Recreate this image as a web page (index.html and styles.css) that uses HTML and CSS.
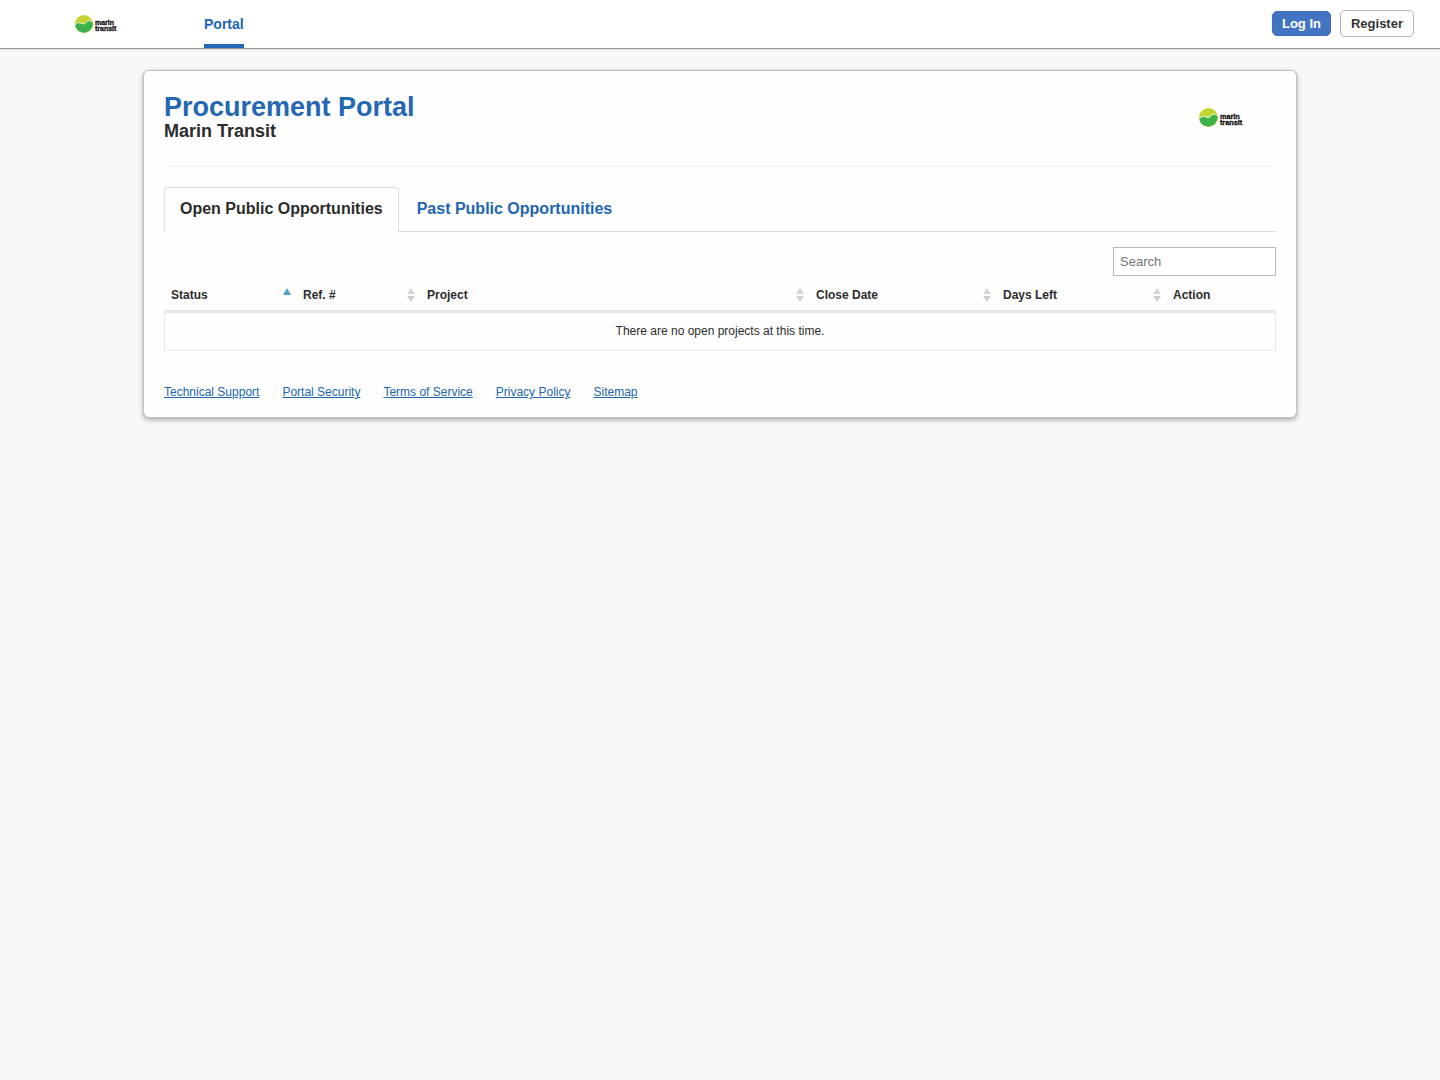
FILE: index.html
```html
<!DOCTYPE html>
<html lang="en">
<head>
<meta charset="utf-8">
<meta name="viewport" content="width=device-width, initial-scale=1">
<title>Procurement Portal - Marin Transit</title>
<link rel="stylesheet" href="styles.css">
</head>
<body>
<header class="topbar">
  <a class="brand" href="#" aria-label="Marin Transit">
    <svg class="brand-logo" viewBox="0 0 46 20">
      <circle cx="10" cy="10" r="9" fill="#c3d32f"/>
      <path d="M1 11 C3 9 4 8.6 6 8.8 C8 9.2 8.6 10.4 10 10 C12 9 13 6.8 15 6.6 C16.4 6.6 17.6 7.6 18.8 8.2 A9 9 0 1 1 1 11Z" fill="#3bb24a"/>
      <path d="M1 11 C3 9 4 8.6 6 8.8 C8 9.2 8.6 10.4 10 10 C12 9 13 6.8 15 6.6 C16.4 6.6 17.6 7.6 18.8 8.2" fill="none" stroke="#eef5c8" stroke-width="1"/>
      <text class="logo-word" x="21" y="11">marin</text>
      <text class="logo-word" x="21" y="17">transit</text>
    </svg>
  </a>
  <nav class="nav"><a class="nav-link" href="#">Portal</a></nav>
  <div class="account">
    <button class="btn btn-primary" type="button">Log In</button>
    <button class="btn btn-plain" type="button">Register</button>
  </div>
</header>
<main class="card">
  <div class="heading">
    <div>
      <h1 class="title">Procurement Portal</h1>
      <h2 class="agency">Marin Transit</h2>
    </div>
    <svg class="agency-logo" viewBox="0 0 46 20" role="img" aria-label="Marin Transit">
      <circle cx="10" cy="10" r="9" fill="#c3d32f"/>
      <path d="M1 11 C3 9 4 8.6 6 8.8 C8 9.2 8.6 10.4 10 10 C12 9 13 6.8 15 6.6 C16.4 6.6 17.6 7.6 18.8 8.2 A9 9 0 1 1 1 11Z" fill="#3bb24a"/>
      <path d="M1 11 C3 9 4 8.6 6 8.8 C8 9.2 8.6 10.4 10 10 C12 9 13 6.8 15 6.6 C16.4 6.6 17.6 7.6 18.8 8.2" fill="none" stroke="#eef5c8" stroke-width="1"/>
      <text class="logo-word" x="21" y="11">marin</text>
      <text class="logo-word" x="21" y="17">transit</text>
    </svg>
  </div>
  <nav class="tabs">
    <a class="tab tab-active" href="#">Open Public Opportunities</a>
    <a class="tab" href="#">Past Public Opportunities</a>
  </nav>
  <div class="filter"><input class="search" type="search" placeholder="Search" aria-label="Search"></div>
  <table class="projects">
    <colgroup><col class="col-status"><col class="col-ref"><col><col class="col-close"><col class="col-days"><col class="col-action"></colgroup>
    <thead>
      <tr>
        <th scope="col"><div class="th">Status<span class="sort sort-asc"></span></div></th>
        <th scope="col"><div class="th">Ref. #<span class="sort"></span></div></th>
        <th scope="col"><div class="th">Project<span class="sort"></span></div></th>
        <th scope="col"><div class="th">Close Date<span class="sort"></span></div></th>
        <th scope="col"><div class="th">Days Left<span class="sort"></span></div></th>
        <th scope="col"><div class="th">Action</div></th>
      </tr>
    </thead>
    <tbody><tr><td colspan="6">There are no open projects at this time.</td></tr></tbody>
  </table>
  <footer class="links">
    <a href="#">Technical Support</a>
    <a href="#">Portal Security</a>
    <a href="#">Terms of Service</a>
    <a href="#">Privacy Policy</a>
    <a href="#">Sitemap</a>
  </footer>
</main>
</body>
</html>
```
FILE: styles.css
```css
* { box-sizing: border-box; }

body {
  margin: 0;
  background: #f8f8f8;
  color: #2c2c2c;
  font-family: "Liberation Sans", Arial, sans-serif;
  font-size: 12px;
}

h1, h2 { margin: 0; }

a { color: #2166b0; }

.logo-word { font-size: 7px; font-weight: bold; fill: #111; stroke: #111; stroke-width: 0.3px; }

/* Top bar */
.topbar {
  display: flex;
  height: 49px;
  padding: 0 26px 0 74px;
  background: #fff;
  border-bottom: 1px solid #999;
  box-shadow: 0 1px 2px #ddd;
}

.brand { display: flex; align-items: center; width: 130px; }
.brand-logo { width: 46px; height: 20px; }
.nav { display: flex; }

.nav-link {
  border-bottom: 4px solid #2468b8;
  font-size: 14px;
  font-weight: bold;
  line-height: 48px;
  height: 48px;
  text-decoration: none;
}

.account { display: flex; align-items: center; gap: 9px; height: 47px; margin-left: auto; }

.btn {
  padding: 0 10px;
  border: 1px solid #3d6fbd;
  border-radius: 5px;
  font: bold 13px/23px "Liberation Sans", Arial, sans-serif;
}
.btn-primary { padding: 0 9px; background: #4274c4; color: #fff; }
.btn-plain { background: #fff; border-color: #b5b5b5; color: #333; line-height: 25px; }

/* Card */
.card {
  width: calc(80% + 2px);
  margin: 21px auto;
  padding: 22px 20px 18px;
  background: #fefefe;
  border: 1px solid #c0c0c0;
  border-radius: 6px;
  box-shadow: 0 2px 5px #aaa;
}

.heading {
  display: flex;
  justify-content: space-between;
  align-items: flex-start;
  height: 74px;
  margin: 0 3px 20px;
  border-bottom: 1px solid #eee;
}
.heading > div { margin-left: -3px; }
.title { color: #2468b4; font-size: 27px; line-height: 28px; }
.agency { font-size: 18px; line-height: 20px; }
.agency-logo { width: 48px; height: 21px; margin: 14px 27px 0 0; }

.tabs { display: flex; height: 45px; gap: 2px; border-bottom: 1px solid #ddd; }
.tab {
  height: 45px;
  padding: 0 15px;
  border: 1px solid transparent;
  border-bottom: 0;
  border-radius: 4px 4px 0 0;
  font-size: 16px;
  font-weight: bold;
  line-height: 42px;
  text-decoration: none;
}
.tab-active { background: #fefefe; border-color: #ddd; color: #2c2c2c; }

.filter { display: flex; justify-content: flex-end; padding: 15px 0 4px; }
.search {
  width: 163px;
  height: 29px;
  padding: 0 6px;
  border: 1px solid #bbb;
  appearance: none;
  background: #fff;
  color: #333;
  font: 13px "Liberation Sans", Arial, sans-serif;
}
.search::placeholder { color: #757575; }

.projects {
  width: 100%;
  table-layout: fixed;
  border-collapse: separate;
  border-spacing: 0;
}
.col-status { width: 132px; }
.col-ref { width: 124px; }
.col-close { width: 187px; }
.col-days { width: 170px; }
.col-action { width: 110px; }
.projects th {
  height: 33px;
  padding: 0 5px 0 7px;
  border-bottom: 3px solid #e8e8e8;
}
.projects td {
  height: 38px;
  padding: 0 7px 2px;
  border: 1px solid #eaeaea;
  border-top: 0;
  text-align: center;
}
.th { display: flex; justify-content: space-between; align-items: center; height: 16px; }

/* Sort arrows: a pair of triangles, the active one alone */
.sort { display: flex; flex-direction: column; gap: 2px; width: 8px; height: 14px; }
.sort::before, .sort::after { content: ""; border: 4px solid transparent; }
.sort::before { border-top: 0; border-bottom: 6px solid #d6d6d6; }
.sort::after { border-bottom: 0; border-top: 6px solid #d0d0d0; }
.sort-asc::before { border-bottom: 7px solid #4fa3c7; }
.sort-asc::after { display: none; }

.links { display: flex; gap: 23px; margin-top: 34px; line-height: 14px; }
```
